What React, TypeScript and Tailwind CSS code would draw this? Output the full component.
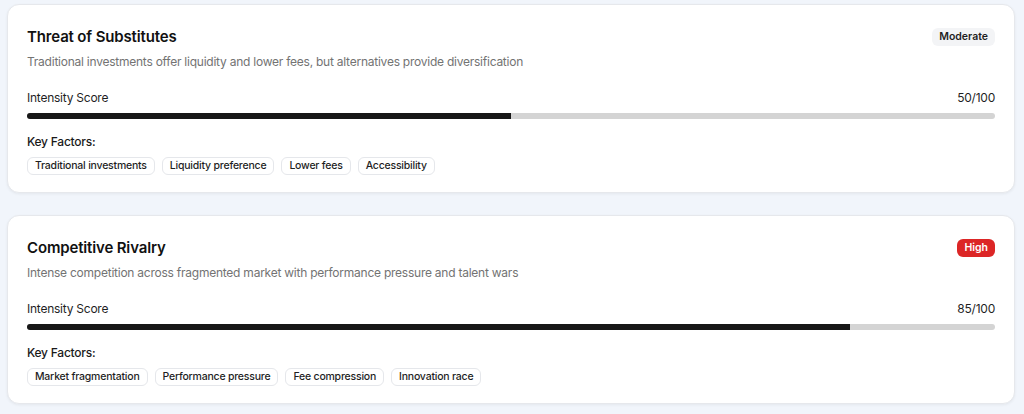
import React from "react";

type Force = {
  title: string;
  description: string;
  level: string;
  score: number;
  factors: string[];
};

const forces: Force[] = [
  {
    title: "Threat of Substitutes",
    description:
      "Traditional investments offer liquidity and lower fees, but alternatives provide diversification",
    level: "Moderate",
    score: 50,
    factors: ["Traditional investments", "Liquidity preference", "Lower fees", "Accessibility"],
  },
  {
    title: "Competitive Rivalry",
    description:
      "Intense competition across fragmented market with performance pressure and talent wars",
    level: "High",
    score: 85,
    factors: ["Market fragmentation", "Performance pressure", "Fee compression", "Innovation race"],
  },
];

const ForceCard: React.FC<{ force: Force }> = ({ force }) => {
  const badgeClass =
    force.level === "High"
      ? "bg-[#dc2626] text-white"
      : "bg-[#f3f4f6] text-[#1f1f1f]";

  return (
    <div className="bg-white rounded-xl border border-[#e6e8ec] shadow-[0_1px_3px_rgba(0,0,0,0.06)] px-[19px] pt-5 pb-[17px]">
      <div className="flex items-center justify-between">
        <h3 className="text-[15px] leading-6 font-semibold tracking-[-0.01em] text-[#111111]">
          {force.title}
        </h3>
        <span
          className={`text-[10.5px] leading-[18px] font-semibold px-[7px] rounded-md ${badgeClass}`}
        >
          {force.level}
        </span>
      </div>
      <p className="mt-1 text-[12px] leading-[18px] tracking-[-0.02em] text-[#737373]">
        {force.description}
      </p>

      <div className="mt-[18px] flex items-center justify-between text-[12px] leading-[18px] tracking-[-0.02em] text-[#1f1f1f]">
        <span>Intensity Score</span>
        <span>{force.score}/100</span>
      </div>
      <div className="mt-[6px] h-[6px] w-full rounded-full bg-[#d4d4d4] overflow-hidden">
        <div className="h-full bg-[#171717]" style={{ width: `${force.score}%` }} />
      </div>

      <div className="mt-[14px] text-[12px] leading-[18px] tracking-[-0.02em] font-medium text-[#1a1a1a]">
        Key Factors:
      </div>
      <div className="mt-[6px] flex flex-wrap gap-[7px]">
        {force.factors.map((f) => (
          <span
            key={f}
            className="h-[18px] flex items-center px-[7px] rounded-md border border-[#e5e7eb] text-[10.5px] tracking-[-0.02em] font-medium text-[#1f1f1f]"
          >
            {f}
          </span>
        ))}
      </div>
    </div>
  );
};

export default function App() {
  return (
    <div
      className="min-h-screen bg-[#f1f5fb] pt-1 pl-[7px] pr-[9px] flex flex-col gap-[22px]"
      style={{ fontFamily: "Inter, 'Noto Sans', sans-serif" }}
    >
      {forces.map((f) => (
        <ForceCard key={f.title} force={f} />
      ))}
    </div>
  );
}
